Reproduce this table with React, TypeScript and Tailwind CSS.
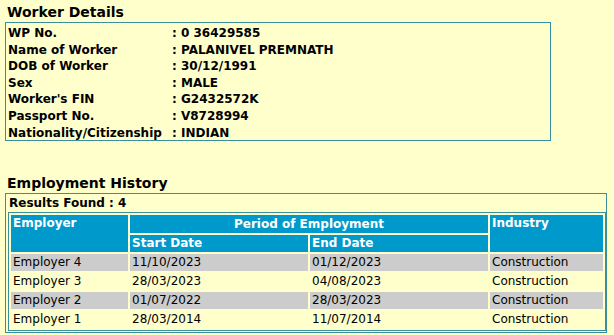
import React from 'react'

const worker: [string, string][] = [
  ['WP No.', '0 36429585'],
  ['Name of Worker', 'PALANIVEL PREMNATH'],
  ['DOB of Worker', '30/12/1991'],
  ['Sex', 'MALE'],
  ["Worker's FIN", 'G2432572K'],
  ['Passport No.', 'V8728994'],
  ['Nationality/Citizenship', 'INDIAN'],
]

const history = [
  { employer: 'Employer 4', start: '11/10/2023', end: '01/12/2023', industry: 'Construction' },
  { employer: 'Employer 3', start: '28/03/2023', end: '04/08/2023', industry: 'Construction' },
  { employer: 'Employer 2', start: '01/07/2022', end: '28/03/2023', industry: 'Construction' },
  { employer: 'Employer 1', start: '28/03/2014', end: '11/07/2014', industry: 'Construction' },
]

const App: React.FC = () => {
  return (
    <div className="min-h-[335px] w-[614px] bg-[#ffffcc] pt-[3px] pl-[5px] text-[12px] text-black font-['DejaVu_Sans',Verdana,sans-serif]">
      <h2 className="pl-[2px] text-[14px] font-bold leading-[19px]">Worker Details</h2>
      <div className="w-[546px] h-[119px] border border-[#3a8f9c] pt-[2px] pl-[2px]">
        <table className="border-collapse font-bold">
          <tbody>
            {worker.map(([label, value]) => (
              <tr key={label} className="h-[16.6px] leading-[16px]">
                <td className="w-[164px] p-0 align-top">{label}</td>
                <td className="p-0 align-top">: {value}</td>
              </tr>
            ))}
          </tbody>
        </table>
      </div>

      <h2 className="mt-[33px] pl-[2px] text-[14px] font-bold leading-[19px]">Employment History</h2>
      <div className="w-[602px] border border-[#3a8f9c] pb-[1px] pl-[2px]">
        <div className="pl-[1px] font-bold leading-[18px]">Results Found : 4</div>
        <table className="w-[598px] border border-[#3a8f9c] border-separate border-spacing-[2px]">
          <thead>
            <tr className="h-[18px]">
              <th rowSpan={2} className="w-[117px] bg-[#0099cc] px-[2px] py-0 text-left align-top font-bold text-white leading-[17px]">
                Employer
              </th>
              <th colSpan={2} className="bg-[#0099cc] p-0 text-center font-bold text-white leading-[17px]">
                Period of Employment
              </th>
              <th rowSpan={2} className="bg-[#0099cc] px-[2px] py-0 text-left align-top font-bold text-white leading-[17px]">
                Industry
              </th>
            </tr>
            <tr className="h-[17px]">
              <th className="w-[178px] bg-[#0099cc] px-[2px] py-0 text-left font-bold text-white leading-[17px]">Start Date</th>
              <th className="w-[178px] bg-[#0099cc] px-[2px] py-0 text-left font-bold text-white leading-[17px]">End Date</th>
            </tr>
          </thead>
          <tbody>
            {history.map((row, i) => (
              <tr key={row.employer} className={i % 2 === 0 ? 'bg-[#cccccc]' : ''}>
                <td className="px-[2px] py-0 leading-[17px]">{row.employer}</td>
                <td className="px-[2px] py-0 leading-[17px]">{row.start}</td>
                <td className="px-[2px] py-0 leading-[17px]">{row.end}</td>
                <td className="px-[2px] py-0 leading-[17px]">{row.industry}</td>
              </tr>
            ))}
          </tbody>
        </table>
      </div>
    </div>
  )
}

export default App
